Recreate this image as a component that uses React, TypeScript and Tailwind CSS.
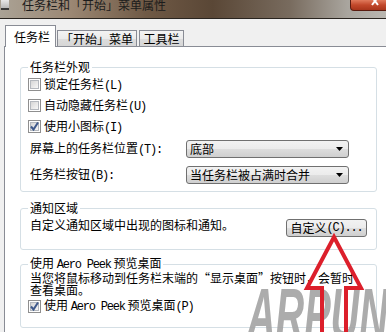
import React from "react";

// Latin parts of the dialog text use a fixed 6px advance, like SimSun at 12px
const Lat = ({ children }: { children: React.ReactNode }) => (
  <span className="font-['Liberation_Mono',monospace] tracking-[-1.2px]">{children}</span>
);

const CheckBox = ({ checked }: { checked?: boolean }) => (
  <span className="relative flex h-[13px] w-[13px] shrink-0 items-center justify-center border border-[#8f8f8f] bg-white">
    <span className="h-[9px] w-[9px] border border-[#b4b8be] bg-[linear-gradient(135deg,#d6d6d6,#f7f7f7)]" />
    {checked && (
      <svg className="absolute left-0 top-0" width="11" height="11" viewBox="0 0 11 11">
        <path d="M2 5.5 L4.5 8.5 L9 1.5" fill="none" stroke="#405a8c" strokeWidth="2" />
      </svg>
    )}
  </span>
);

const CheckRow = ({
  checked,
  label,
  hot,
  className,
}: {
  checked?: boolean;
  label: React.ReactNode;
  hot: string;
  className?: string;
}) => (
  <div className={`flex items-center gap-[3px] ${className ?? "h-[21px]"}`}>
    <CheckBox checked={checked} />
    <span className="leading-[14px]">
      {label}
      <Lat>({hot})</Lat>
    </span>
  </div>
);

const winButton =
  "border border-[#707070] rounded-[3px] bg-[linear-gradient(180deg,#f2f2f2_0%,#ebebeb_50%,#dddddd_51%,#cfcfcf_100%)]";

const Select = ({ value }: { value: string }) => (
  <div className={`flex h-[18px] w-[163px] items-center justify-between pl-[3px] pr-[5px] ${winButton}`}>
    <span className="leading-[14px]">{value}</span>
    <svg width="7" height="4" viewBox="0 0 7 4">
      <path d="M0 0 H7 L3.5 4 Z" fill="#000" />
    </svg>
  </div>
);

const Group = ({ title, className, children }: { title: React.ReactNode; className?: string; children: React.ReactNode }) => (
  <fieldset className={`ml-[15px] w-[357px] rounded-[3px] border border-[#d5dfe5] pl-[7px] pr-[9px] ${className ?? ""}`}>
    <legend className="px-[2px] leading-[14px]">{title}</legend>
    {children}
  </fieldset>
);

export default function App() {
  return (
    <div
      lang="zh-CN"
      className="relative h-[332px] w-[386px] overflow-hidden bg-[#f0f0f0] font-['Noto_Sans_CJK_SC',sans-serif] text-[12px] text-black"
    >
      {/* title bar */}
      <div className="relative flex h-[19px] border-b border-[#2a2520] bg-[linear-gradient(90deg,#aaa295_0%,#9c8874_18%,#6f5945_38%,#5a4736_55%,#786b5e_75%,#a9a59e_90%,#bab7b1_100%)]">
        <div className="ml-[1px] h-[10px] w-[8px] border-b-2 border-[#3a3a3a] bg-[linear-gradient(180deg,#e8e8e8,#b9b9b9)]" />
        <span className="-mt-[1px] ml-[13px] text-[12px] leading-[12px] text-[#1c1c1c]">任务栏和「开始」菜单属性</span>
        <div className="absolute left-[350px] top-0 h-[11px] w-[44px] rounded-b-[4px] border border-t-0 border-[#5a1c10] bg-[linear-gradient(180deg,#e07a5c_0%,#c2482b_50%,#a8351b_100%)]">
          <svg className="absolute left-[20px] top-0" width="10" height="6" viewBox="0 0 10 6">
            <path d="M1 -3 L7 5 M7 -3 L1 5" stroke="#fff" strokeWidth="2" />
          </svg>
        </div>
      </div>

      {/* tabs */}
      <div className="relative z-10 flex h-[27px] items-end pl-[5px]">
        <div className="-mb-[1px] flex h-[22px] w-[51px] items-center justify-center border border-b-0 border-[#898c95] bg-white pl-[3px] leading-[14px]">
          任务栏
        </div>
        <div className="ml-[1px] flex h-[16px] w-[80px] items-center justify-center border border-b-0 border-[#898c95] bg-[linear-gradient(180deg,#f3f3f3_0%,#ebebeb_50%,#dddddd_51%,#d6d6d6_100%)] leading-[14px]">
          「开始」菜单
        </div>
        <div className="ml-[2px] flex h-[16px] w-[45px] items-center justify-center border border-b-0 border-[#898c95] bg-[linear-gradient(180deg,#f3f3f3_0%,#ebebeb_50%,#dddddd_51%,#d6d6d6_100%)] leading-[14px]">
          工具栏
        </div>
      </div>

      {/* tab page */}
      <div className="ml-[4px] h-[300px] w-[400px] border-l border-t border-[#898c95] bg-white pt-[13px]">
        <Group title="任务栏外观" className="pb-[7px]">
          <CheckRow label="锁定任务栏" hot="L" />
          <CheckRow label="自动隐藏任务栏" hot="U" />
          <CheckRow checked label="使用小图标" hot="I" />
          <div className="mt-[3px] flex items-center">
            <span className="w-[158px] pl-[2px] leading-[14px]">
              屏幕上的任务栏位置<Lat>(T):</Lat>
            </span>
            <Select value="底部" />
          </div>
          <div className="mt-[8px] flex items-center">
            <span className="w-[158px] pl-[2px] leading-[14px]">
              任务栏按钮<Lat>(B):</Lat>
            </span>
            <Select value="当任务栏被占满时合并" />
          </div>
        </Group>

        <Group title="通知区域" className="mt-[9px] pb-[12px]">
          <div className="mt-[3px] flex items-start justify-between">
            <span className="pl-[2px] leading-[14px]">自定义通知区域中出现的图标和通知。</span>
            <div className={`mt-[1px] flex h-[18px] w-[81px] items-center justify-center leading-[14px] ${winButton}`}>
              自定义<Lat>(C)...</Lat>
            </div>
          </div>
        </Group>

        <Group
          title={
            <>
              使用 <Lat>Aero Peek</Lat> 预览桌面
            </>
          }
          className="mt-[6px] pb-[11px]"
        >
          <p className="pl-[2px] leading-[12px]">
            当您将鼠标移动到任务栏末端的“显示桌面”按钮时，会暂时
            <br />
            查看桌面。
          </p>
          <CheckRow
            checked
            className="h-[20px]"
            label={
              <>
                使用 <Lat>Aero Peek</Lat> 预览桌面
              </>
            }
            hot="P"
          />
        </Group>
      </div>

      {/* watermark */}
      <span className="pointer-events-none absolute left-[247px] top-[278px] origin-left scale-x-[0.55] font-['Liberation_Sans',sans-serif] text-[72px] font-bold italic leading-none text-[#a4a4a4] opacity-90">
        ARPUN
      </span>

      {/* red arrow pointing at the button */}
      <svg className="pointer-events-none absolute left-0 top-0" width="386" height="332" viewBox="0 0 386 332">
        <polyline
          points="322,340 322,288 307,288 334,237 361,288 346,288 346,340"
          fill="none"
          stroke="#dc1f2b"
          strokeWidth="4"
          strokeLinejoin="miter"
        />
      </svg>
    </div>
  );
}
